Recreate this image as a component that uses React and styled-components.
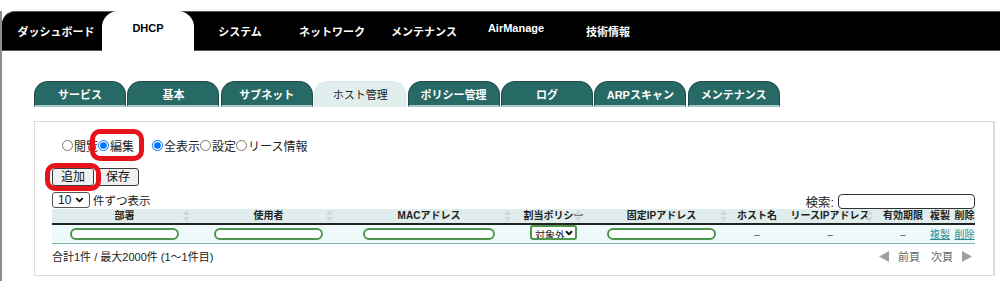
import React from "react";
import styled, { createGlobalStyle } from "styled-components";
import { ChevronDown } from "lucide-react";

const GlobalStyle = createGlobalStyle`
  html, body {
    margin: 0;
    padding: 0;
    background: #fff;
  }
  body {
    font-family: "Liberation Sans", "Noto Sans CJK JP", sans-serif;
    color: #222;
  }
`;

const navItems = [
  { label: "ダッシュボード" },
  { label: "DHCP", active: true, latin: true },
  { label: "システム" },
  { label: "ネットワーク" },
  { label: "メンテナンス" },
  { label: "AirManage", latin: true },
  { label: "技術情報" },
];

const subTabs = [
  "サービス",
  "基本",
  "サブネット",
  "ホスト管理",
  "ポリシー管理",
  "ログ",
  "ARPスキャン",
  "メンテナンス",
];

// widths in px, sum = 923 (table width)
const columns = [
  { label: "部署", width: 145, sort: true },
  { label: "使用者", width: 143, sort: true },
  { label: "MACアドレス", width: 178, sort: true },
  { label: "割当ポリシー", width: 71, sort: true },
  { label: "固定IPアドレス", width: 145, sort: true },
  { label: "ホスト名", width: 46 },
  { label: "リースIPアドレス", width: 100, sort: true },
  { label: "有効期限", width: 46 },
  { label: "複製", width: 28 },
  { label: "削除", width: 21 },
];

export default function App() {
  return (
    <>
      <GlobalStyle />
      <Page>
        <Frame>
          <Nav>
            {navItems.map((item) => (
              <NavItem
                key={item.label}
                $active={item.active}
                $latin={item.latin}
              >
                {item.label}
              </NavItem>
            ))}
          </Nav>

          <SubTabs>
            {subTabs.map((t) => (
              <SubTab key={t} $active={t === "ホスト管理"}>
                {t}
              </SubTab>
            ))}
          </SubTabs>

          <Panel>
            <RadioRow>
              <RadioLabel>
                <Radio type="radio" name="mode" />
                閲覧
              </RadioLabel>
              <RadioLabel $gap="18px">
                <Radio type="radio" name="mode" defaultChecked />
                編集
                <Highlight $inset="-8px -10px -7px -8px" />
              </RadioLabel>
              <RadioLabel>
                <Radio type="radio" name="view" defaultChecked />
                全表示
              </RadioLabel>
              <RadioLabel>
                <Radio type="radio" name="view" />
                設定
              </RadioLabel>
              <RadioLabel>
                <Radio type="radio" name="view" />
                リース情報
              </RadioLabel>
            </RadioRow>

            <ButtonRow>
              <Marked>
                <Button>追加</Button>
                <Highlight $inset="-5px -7px -5px -7px" />
              </Marked>
              <Button>保存</Button>
            </ButtonRow>

            <ToolRow>
              <Length>
                <SelectWrap>
                  <PageSelect defaultValue="10">
                    <option value="10">10</option>
                    <option value="25">25</option>
                    <option value="50">50</option>
                  </PageSelect>
                  <Chevron size={11} strokeWidth={4} />
                </SelectWrap>
                件ずつ表示
              </Length>
              <Search>
                検索:
                <SearchInput type="text" />
              </Search>
            </ToolRow>

            <Table>
              <colgroup>
                {columns.map((c) => (
                  <col key={c.label} style={{ width: c.width }} />
                ))}
              </colgroup>
              <thead>
                <tr>
                  {columns.map((c) => (
                    <Th key={c.label}>
                      {c.label}
                      {c.sort && (
                        <SortIcon width="7" height="12" viewBox="0 0 7 12">
                          <polygon points="3.5,0 7,5 0,5" />
                          <polygon points="0,7 7,7 3.5,12" />
                        </SortIcon>
                      )}
                    </Th>
                  ))}
                </tr>
              </thead>
              <tbody>
                <tr>
                  <Td>
                    <CellInput $w={109} />
                  </Td>
                  <Td>
                    <CellInput $w={109} />
                  </Td>
                  <Td>
                    <CellInput $w={132} />
                  </Td>
                  <Td>
                    <SelectWrap>
                      <PolicySelect defaultValue="none">
                        <option value="none">対象外</option>
                      </PolicySelect>
                      <Chevron size={10} strokeWidth={4.5} $right="3px" />
                    </SelectWrap>
                  </Td>
                  <Td>
                    <CellInput $w={109} />
                  </Td>
                  <Td>–</Td>
                  <Td>–</Td>
                  <Td>–</Td>
                  <Td>
                    <CellLink href="#">複製</CellLink>
                  </Td>
                  <Td>
                    <CellLink href="#">削除</CellLink>
                  </Td>
                </tr>
              </tbody>
            </Table>

            <Footer>
              <span>合計1件 / 最大2000件 (1〜1件目)</span>
              <Pager>
                <svg width="10" height="11" viewBox="0 0 10 11">
                  <polygon points="10,0 10,11 0,5.5" fill="#a0a0a0" />
                </svg>
                <PagerText>前頁</PagerText>
                <PagerText>次頁</PagerText>
                <svg width="10" height="11" viewBox="0 0 10 11">
                  <polygon points="0,0 10,5.5 0,11" fill="#a0a0a0" />
                </svg>
              </Pager>
            </Footer>
          </Panel>
        </Frame>
      </Page>
    </>
  );
}

const Page = styled.div`
  min-height: 281px;
  box-sizing: border-box;
  padding-top: 11px;
`;

const Frame = styled.div`
  min-height: 270px;
  border-left: 2px solid #8c8c8c;
`;

const Nav = styled.nav`
  display: flex;
  height: 38px;
  padding-left: 8px;
  background: #000;
  border-top: 1px solid #555;
  border-bottom: 1px solid #555;
  border-top-left-radius: 13px;
`;

const NavItem = styled.a`
  width: 92px;
  box-sizing: border-box;
  display: flex;
  align-items: center;
  justify-content: center;
  padding-bottom: ${(p) => (p.$latin ? "6px" : "0")};
  margin: ${(p) => (p.$active ? "-1px 0" : "0")};
  background: ${(p) => (p.$active ? "#fff" : "transparent")};
  border-radius: ${(p) => (p.$active ? "16px 16px 0 0" : "0")};
  color: ${(p) => (p.$active ? "#000" : "#fff")};
  font-size: 11px;
  font-weight: 700;
  text-decoration: none;
  white-space: nowrap;
`;

const SubTabs = styled.div`
  display: flex;
  gap: 1.4px;
  margin: 30px 0 0 32px;
`;

const SubTab = styled.div`
  width: 92px;
  height: 26px;
  box-sizing: border-box;
  display: flex;
  align-items: center;
  justify-content: center;
  border: 1px solid ${(p) => (p.$active ? "#d6e6e6" : "#1d4a47")};
  border-bottom: 2px solid ${(p) => (p.$active ? "#e0eeee" : "#a9c9c7")};
  border-radius: 14px 14px 0 0;
  background: ${(p) => (p.$active ? "#e0eeee" : "#276964")};
  color: ${(p) => (p.$active ? "#222" : "#fff")};
  font-size: 11px;
  font-weight: ${(p) => (p.$active ? 400 : 700)};
  white-space: nowrap;
`;

const Panel = styled.div`
  height: 155px;
  box-sizing: border-box;
  margin: 14px 5px 0 32px;
  padding: 15px 18px 0 17px;
  border: 1px solid #dcdcdc;
  border-right-width: 2px;
`;

const RadioRow = styled.div`
  display: flex;
  align-items: center;
  height: 16px;
  padding-left: 10px;
  font-size: 12px;
`;

const RadioLabel = styled.label`
  position: relative;
  display: inline-flex;
  align-items: center;
  margin-right: ${(p) => p.$gap || "0"};
  white-space: nowrap;
`;

const Radio = styled.input`
  width: 11px;
  height: 11px;
  margin: 0 1px 0 0;
`;

const Highlight = styled.span`
  position: absolute;
  inset: ${(p) => p.$inset};
  border: 5px solid #e8121b;
  border-radius: 10px;
  pointer-events: none;
`;

const ButtonRow = styled.div`
  display: flex;
  gap: 3px;
  margin-top: 15px;
`;

const Marked = styled.span`
  position: relative;
  display: inline-flex;
`;

const Button = styled.button`
  height: 18px;
  padding: 0 8px;
  border: 1.5px solid #3c3c3c;
  border-radius: 3px;
  background: #f0f0f0;
  font-family: "Liberation Sans", "Noto Sans CJK JP", sans-serif;
  font-size: 12px;
  line-height: 14px;
  color: #111;
`;

const ToolRow = styled.div`
  display: flex;
  align-items: center;
  justify-content: space-between;
  width: 923px;
  height: 16px;
  margin-top: 6px;
  font-size: 11.5px;
`;

const Length = styled.div`
  display: flex;
  align-items: center;
  gap: 3px;
`;

const SelectWrap = styled.span`
  position: relative;
  display: inline-flex;
`;

const PageSelect = styled.select`
  appearance: none;
  width: 38px;
  height: 16px;
  padding: 0 0 0 5px;
  border: 1px solid #555;
  border-radius: 3px;
  background: #fff;
  font-family: "Liberation Sans", sans-serif;
  font-size: 12px;
  color: #111;
`;

const Chevron = styled(ChevronDown)`
  position: absolute;
  right: ${(p) => p.$right || "5px"};
  top: 50%;
  transform: translateY(-50%);
  color: #111;
  pointer-events: none;
`;

const Search = styled.label`
  display: flex;
  align-items: center;
  gap: 4px;
  margin-top: 2px;
  font-size: 12.5px;
`;

const SearchInput = styled.input`
  width: 137px;
  height: 15px;
  box-sizing: border-box;
  padding: 0 3px;
  border: 1px solid #333;
  border-radius: 4px;
`;

const Table = styled.table`
  width: 923px;
  margin-top: 1px;
  border-collapse: collapse;
  table-layout: fixed;
`;

const Th = styled.th`
  position: relative;
  height: 14px;
  padding: 0;
  background: #dfeded;
  border-bottom: 2px solid #222;
  font-size: 10px;
  font-weight: 700;
  line-height: 14px;
  text-align: center;
  white-space: nowrap;
  color: #222;
`;

const SortIcon = styled.svg`
  position: absolute;
  right: 7px;
  top: 1px;
  fill: #d6d6d6;
`;

const Td = styled.td`
  height: 15px;
  padding: 0;
  background: #eefafa;
  border-bottom: 1px solid #7fb0ad;
  font-size: 10px;
  line-height: 15px;
  text-align: center;
  color: #555;
`;

const CellInput = styled.input`
  display: block;
  width: ${(p) => p.$w}px;
  height: 12px;
  box-sizing: border-box;
  margin: 0 auto;
  border: 2px solid #4d964d;
  border-radius: 7px;
  background: #fff;
`;

const PolicySelect = styled.select`
  appearance: none;
  width: 47px;
  height: 15px;
  padding: 0 0 0 3px;
  border: 2px solid #4d964d;
  border-radius: 3px;
  background: #fff;
  font-family: "Noto Sans CJK JP", sans-serif;
  font-size: 10px;
  color: #222;
`;

const CellLink = styled.a`
  color: #2a8c96;
  text-decoration: underline;
`;

const Footer = styled.div`
  display: flex;
  align-items: center;
  justify-content: space-between;
  width: 923px;
  margin-top: 4px;
  font-size: 11px;
`;

const Pager = styled.div`
  display: flex;
  align-items: center;
  gap: 7px;
  padding-right: 3px;
`;

const PagerText = styled.span`
  color: #666;
  margin: 0 2px;
`;
